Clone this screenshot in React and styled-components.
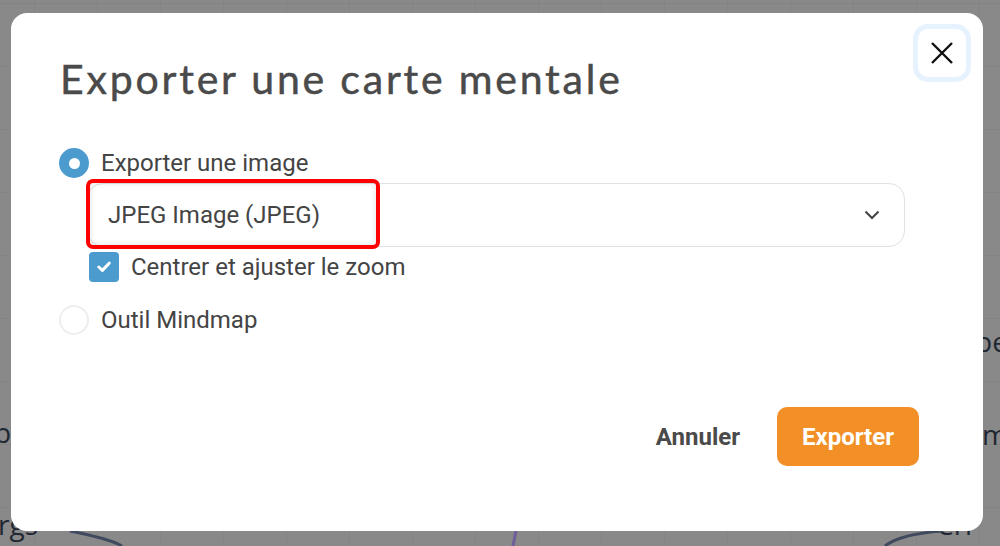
import React from "react";
import styled, { createGlobalStyle } from "styled-components";

const GlobalStyle = createGlobalStyle`
  html, body {
    margin: 0;
    padding: 0;
  }
  body {
    font-family: Roboto, "Liberation Sans", sans-serif;
    color: #444;
  }
`;

const Page = styled.div`
  position: relative;
  width: 1000px;
  height: 546px;
  overflow: hidden;
  display: flex;
  align-items: flex-start;
  background-color: #898989;
  background-image: linear-gradient(to right, rgba(0, 0, 0, 0.035) 1px, transparent 1px),
    linear-gradient(to bottom, rgba(0, 0, 0, 0.035) 1px, transparent 1px);
  background-size: 63px 63px;
  background-position: 34px 3px;
`;

// mind map nodes peeking out behind the dimmed overlay
const NodeText = styled.span`
  position: absolute;
  left: ${(p) => p.x}px;
  top: ${(p) => p.y}px;
  font-family: "Open Sans", sans-serif;
  font-size: ${(p) => p.size || 28}px;
  line-height: 1;
  color: #1f2733;
  white-space: nowrap;
`;

const Links = styled.svg`
  position: absolute;
  left: 0;
  top: 0;
`;

const Modal = styled.div`
  position: relative;
  z-index: 1;
  margin: 13px 0 0 11px;
  width: 972px;
  height: 518px;
  box-sizing: border-box;
  background: #fff;
  border-radius: 16px;
  padding: 42px 64px 0 48px;
  display: flex;
  flex-direction: column;
`;

const CloseButton = styled.button`
  position: absolute;
  top: 11px;
  right: 12px;
  width: 58px;
  height: 58px;
  box-sizing: border-box;
  border: 5px solid #e6f2fd;
  border-radius: 15px;
  background: #fff;
  display: flex;
  align-items: center;
  justify-content: center;
  padding: 0;
  cursor: pointer;
`;

const Title = styled.h2`
  margin: 0 0 45px 1px;
  font-family: Lato, "Noto Sans", sans-serif;
  font-weight: 400;
  font-size: 41px;
  line-height: 48px;
  letter-spacing: 2.8px;
  color: #4a4a4a;
  -webkit-text-stroke: 0.5px #4a4a4a;
`;

const Options = styled.div`
  display: flex;
  flex-direction: column;
`;

const OptionRow = styled.label`
  display: flex;
  align-items: center;
  gap: 12px;
  height: 30px;
  margin-top: ${(p) => p.gap || 0}px;
  margin-left: ${(p) => p.indent || 0}px;
  font-size: 24px;
  color: #444;
  cursor: pointer;
`;

const Radio = styled.span`
  width: 30px;
  height: 30px;
  box-sizing: border-box;
  border-radius: 50%;
  flex: none;
  background: ${(p) => (p.checked ? "#4b9bcf" : "#fff")};
  border: ${(p) => (p.checked ? "none" : "2px solid #eeeeee")};
  display: flex;
  align-items: center;
  justify-content: center;
  &::after {
    content: "";
    display: ${(p) => (p.checked ? "block" : "none")};
    width: 11px;
    height: 11px;
    border-radius: 50%;
    background: #fff;
  }
`;

const Checkbox = styled.span`
  width: 30px;
  height: 30px;
  flex: none;
  border-radius: 4px;
  background: #4b9bcf;
  display: flex;
  align-items: center;
  justify-content: center;
`;

const SelectWrap = styled.div`
  position: relative;
  margin: 5px 0 5px 28px;
  width: 818px;
`;

const Select = styled.div`
  height: 64px;
  box-sizing: border-box;
  border: 1px solid #e2e2e2;
  border-radius: 16px;
  padding: 0 24px 0 20px;
  display: flex;
  align-items: center;
  justify-content: space-between;
  font-size: 24px;
  color: #444;
`;

const Highlight = styled.span`
  position: absolute;
  left: -1px;
  top: -4px;
  width: 294px;
  height: 70px;
  box-sizing: border-box;
  border: 4px solid #ff0000;
  border-radius: 7px;
  box-shadow: inset 0 0 6px rgba(0, 0, 0, 0.12);
  pointer-events: none;
`;

const Footer = styled.div`
  margin-top: auto;
  margin-bottom: 65px;
  display: flex;
  justify-content: flex-end;
  align-items: center;
  gap: 37px;
`;

const TextButton = styled.button`
  border: none;
  background: none;
  padding: 0;
  font-family: Roboto, sans-serif;
  font-weight: 700;
  font-size: 24px;
  color: #4a4a4a;
  cursor: pointer;
`;

const PrimaryButton = styled.button`
  width: 142px;
  height: 59px;
  border: none;
  border-radius: 10px;
  background: #f28f26;
  color: #fff;
  font-family: Roboto, sans-serif;
  font-weight: 700;
  font-size: 24px;
  cursor: pointer;
`;

const App = () => {
  return (
    <>
      <GlobalStyle />
      <Page>
        <NodeText x={-6} y={418}>po</NodeText>
        <NodeText x={-2} y={510}>rgs</NodeText>
        <NodeText x={975} y={327}>pe</NodeText>
        <NodeText x={982} y={420}>m</NodeText>
        <NodeText x={936} y={510}>Cri</NodeText>
        <Links width="1000" height="546">
          <path d="M70 531 C 95 536, 112 540, 122 546" stroke="#3f4a5e" strokeWidth="3" fill="none" />
          <path d="M516 531 L 513 546" stroke="#6f5d9c" strokeWidth="3" fill="none" />
          <path d="M942 531 C 915 533, 895 538, 885 546" stroke="#3f4a5e" strokeWidth="3" fill="none" />
        </Links>

        <Modal>
          <CloseButton aria-label="Fermer">
            <svg width="24" height="24" viewBox="0 0 24 24">
              <path d="M2 2 L22 22 M22 2 L2 22" stroke="#111" strokeWidth="2.4" />
            </svg>
          </CloseButton>

          <Title>Exporter une carte mentale</Title>

          <Options>
            <OptionRow>
              <Radio checked />
              Exporter une image
            </OptionRow>

            <SelectWrap>
              <Select>
                <span>JPEG Image (JPEG)</span>
                <svg width="16" height="10" viewBox="0 0 16 10">
                  <path d="M1.5 1.5 L8 8 L14.5 1.5" stroke="#444" strokeWidth="2" fill="none" />
                </svg>
              </Select>
              <Highlight />
            </SelectWrap>

            <OptionRow indent={30}>
              <Checkbox>
                <svg width="14" height="12" viewBox="0 0 14 12">
                  <path d="M1.8 6 L5.4 9.4 L12.2 2.2" stroke="#fff" strokeWidth="3" fill="none" strokeLinecap="round" strokeLinejoin="round" />
                </svg>
              </Checkbox>
              Centrer et ajuster le zoom
            </OptionRow>

            <OptionRow gap={23}>
              <Radio />
              Outil Mindmap
            </OptionRow>
          </Options>

          <Footer>
            <TextButton>Annuler</TextButton>
            <PrimaryButton>Exporter</PrimaryButton>
          </Footer>
        </Modal>
      </Page>
    </>
  );
};

export default App;
